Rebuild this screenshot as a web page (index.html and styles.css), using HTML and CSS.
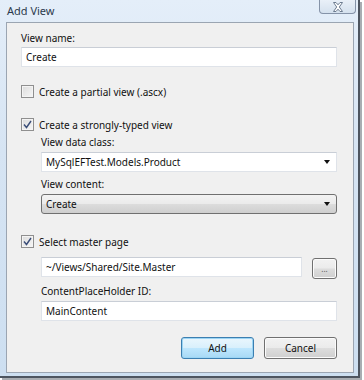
FILE: index.html
```html
<!DOCTYPE html>
<html lang="en">
<head>
    <meta charset="UTF-8">
    <title>Add View</title>
    <link rel="stylesheet" href="styles.css">
</head>
<body>
    <div class="window">
        <div class="title-bar">
            <div class="title">Add View</div>
            <div class="close-btn">
                <svg width="14" height="10" viewBox="0 0 14 10">
                    <path d="M2.5 0.5 L5 0.5 L7 2.8 L9 0.5 L11.5 0.5 L8.3 5 L11.5 9.5 L9 9.5 L7 7.2 L5 9.5 L2.5 9.5 L5.7 5 Z" fill="#fff" stroke="#6d7c90" stroke-width="1"/>
                </svg>
            </div>
        </div>

        <div class="panel">
            <div class="label first">View name:</div>
            <div class="textbox">Create</div>

            <div class="check-row partial">
                <span class="checkbox"></span>
                <span>Create a partial view (.ascx)</span>
            </div>

            <div class="check-row typed">
                <span class="checkbox">
                    <svg width="9" height="9" viewBox="0 0 9 9"><path d="M1 4.5 L3.5 7.5 L8 1" fill="none" stroke="#3a4d78" stroke-width="1.4"/></svg>
                </span>
                <span>Create a strongly-typed view</span>
            </div>

            <div class="group">
                <div class="label tight">View data class:</div>
                <div class="textbox combo">
                    <span>MySqlEFTest.Models.Product</span>
                    <span class="arrow"></span>
                </div>

                <div class="label">View content:</div>
                <div class="dropdown">
                    <span>Create</span>
                    <span class="arrow"></span>
                </div>
            </div>

            <div class="check-row master">
                <span class="checkbox">
                    <svg width="9" height="9" viewBox="0 0 9 9"><path d="M1 4.5 L3.5 7.5 L8 1" fill="none" stroke="#3a4d78" stroke-width="1.4"/></svg>
                </span>
                <span>Select master page</span>
            </div>

            <div class="group">
                <div class="browse-row">
                    <div class="textbox path">~/Views/Shared/Site.Master</div>
                    <div class="button small">...</div>
                </div>
                <div class="label">ContentPlaceHolder ID:</div>
                <div class="textbox">MainContent</div>
            </div>

            <div class="actions">
                <div class="button default">Add</div>
                <div class="button">Cancel</div>
            </div>
        </div>
    </div>
</body>
</html>
```

FILE: styles.css
```css
* {
    margin: 0;
    padding: 0;
    box-sizing: border-box;
}

body {
    font-family: 'Noto Sans', 'Open Sans', sans-serif;
    font-size: 10px;
    color: #111;
    background: #fff;
    width: 364px;
    height: 380px;
    overflow: hidden;
}

.window {
    width: 360px;
    height: 378px;
    background: linear-gradient(180deg, #e4eef9 0%, #d6e4f3 40%, #cddff1 100%);
    border-right: 2px solid #4d5560;
    border-bottom: 2px solid #4d5560;
    box-shadow: 2px 2px 0 #a9adb2;
    padding: 0 4px 3px 6px;
    display: flex;
    flex-direction: column;
}

.title-bar {
    height: 22px;
    display: flex;
    justify-content: space-between;
    align-items: flex-start;
}

.title {
    font-size: 11px;
    color: #2b3a4c;
    margin-top: 3px;
    margin-left: 1px;
}

.close-btn {
    width: 37px;
    height: 14px;
    margin-right: -2px;
    border: 1px solid #8593a8;
    border-top: none;
    border-radius: 0 0 4px 4px;
    background: linear-gradient(180deg, #e9f0f8 0%, #d5e1ee 100%);
    display: flex;
    align-items: center;
    justify-content: center;
}

.panel {
    flex: 1;
    background: #f0f0f0;
    border: 1px solid #9ba5b2;
    padding: 8px 16px 0 14px;
    display: flex;
    flex-direction: column;
}

.label {
    height: 15px;
    line-height: 15px;
    margin-top: 5px;
    margin-bottom: 2px;
}

.label.first {
    margin-top: 0;
    margin-bottom: 1px;
}

.label.tight {
    margin-top: 3px;
}

.textbox {
    height: 20px;
    background: #fff;
    border: 1px solid #dfe3e9;
    border-top-color: #c9ced6;
    padding: 0 4px;
    line-height: 18px;
    display: flex;
    align-items: center;
}

.combo {
    justify-content: space-between;
}

.arrow {
    width: 0;
    height: 0;
    border-left: 3px solid transparent;
    border-right: 3px solid transparent;
    border-top: 4px solid #111;
    margin-right: 2px;
}

.dropdown {
    height: 20px;
    border: 1px solid #707070;
    border-radius: 3px;
    background: linear-gradient(180deg, #f3f3f3 0%, #ebebeb 48%, #dcdcdc 52%, #cfcfcf 100%);
    padding: 0 4px;
    display: flex;
    align-items: center;
    justify-content: space-between;
}

.check-row {
    height: 15px;
    display: flex;
    align-items: center;
    gap: 5px;
}

.check-row.partial {
    margin-top: 17px;
}

.check-row.typed {
    margin-top: 18px;
}

.check-row.master {
    margin-top: 20px;
}

.checkbox {
    width: 13px;
    height: 13px;
    border: 1px solid #8f8f8f;
    background: linear-gradient(135deg, #dcdcdc 0%, #f6f6f6 100%);
    box-shadow: inset 0 0 0 1px #f4f4f4;
    display: flex;
    align-items: center;
    justify-content: center;
}

.group {
    padding-left: 20px;
    display: flex;
    flex-direction: column;
}

.browse-row {
    margin-top: 8px;
    display: flex;
    align-items: flex-start;
    gap: 10px;
}

.browse-row .path {
    flex: 1;
}

.button {
    height: 22px;
    border: 1px solid #707070;
    border-radius: 3px;
    background: linear-gradient(180deg, #f2f2f2 0%, #ebebeb 48%, #dddddd 52%, #cfcfcf 100%);
    box-shadow: inset 0 0 0 1px #fbfbfb;
    display: flex;
    align-items: center;
    justify-content: center;
}

.button.small {
    width: 25px;
    height: 21px;
    margin-top: 1px;
    font-size: 8px;
    color: #555;
}

.actions {
    margin-top: 16px;
    display: flex;
    justify-content: flex-end;
    gap: 10px;
}

.actions .button {
    width: 73px;
}

.button.default {
    border-color: #3c7fb1;
    background: linear-gradient(180deg, #eaf6fd 0%, #d9f0fc 48%, #bee6fd 52%, #a7d9f5 100%);
    box-shadow: inset 0 0 0 1px #9cd5f4;
}
```
